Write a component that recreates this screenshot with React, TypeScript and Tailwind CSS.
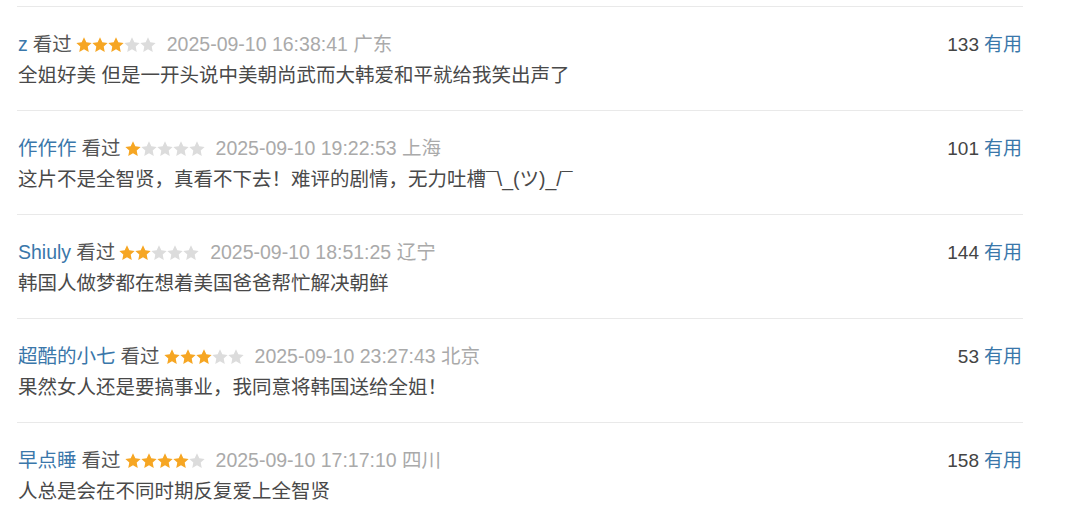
const comments = [
  { user: 'z', stars: 3, time: '2025-09-10 16:38:41', area: '广东', votes: 133, text: '全姐好美 但是一开头说中美朝尚武而大韩爱和平就给我笑出声了' },
  { user: '作作作', stars: 1, time: '2025-09-10 19:22:53', area: '上海', votes: 101, text: '这片不是全智贤，真看不下去！难评的剧情，无力吐槽¯\\_(ツ)_/¯' },
  { user: 'Shiuly', stars: 2, time: '2025-09-10 18:51:25', area: '辽宁', votes: 144, text: '韩国人做梦都在想着美国爸爸帮忙解决朝鲜' },
  { user: '超酷的小七', stars: 3, time: '2025-09-10 23:27:43', area: '北京', votes: 53, text: '果然女人还是要搞事业，我同意将韩国送给全姐！' },
  { user: '早点睡', stars: 4, time: '2025-09-10 17:17:10', area: '四川', votes: 158, text: '人总是会在不同时期反复爱上全智贤' },
];

function Star({ on }: { on: boolean }) {
  return (
    <svg viewBox="1 1 22 22" className="h-4 w-4">
      <path
        d="M12 1.5l3.2 6.7 7.3.9-5.4 5.1 1.4 7.3L12 17.9l-6.5 3.6 1.4-7.3-5.4-5.1 7.3-.9z"
        fill={on ? '#f6a623' : '#dcdcdc'}
      />
    </svg>
  );
}

export default function App() {
  return (
    <div className="w-[1080px] h-[520px] bg-white overflow-hidden pt-[6px] pl-[17px] font-['Liberation_Sans','Noto_Sans_CJK_SC',sans-serif]">
      <div className="w-[1006px]">
        {comments.map((c) => (
          <div key={c.user} className="border-t border-[#e9e9e9] pt-[25px] pb-[22px]">
            <div className="flex items-center justify-between h-[26px] pl-[1px]">
              <div className="flex items-center text-[19.5px]">
                <span className="text-[#3a77aa]">{c.user}</span>
                <span className="ml-[5px] text-[#555]">看过</span>
                <span className="ml-[4px] flex">
                  {[0, 1, 2, 3, 4].map((i) => (
                    <Star key={i} on={i < c.stars} />
                  ))}
                </span>
                <span className="ml-[11px] text-[#aaa]">{c.time} {c.area}</span>
              </div>
              <div className="text-[19px] pr-[1px]">
                <span className="text-[#444]">{c.votes}</span>
                <span className="ml-[5px] text-[#3a77aa]">有用</span>
              </div>
            </div>
            <div className="mt-[4px] h-[26px] leading-[26px] text-[19.5px] text-[#494949] pl-[1px]">{c.text}</div>
          </div>
        ))}
      </div>
    </div>
  );
}
